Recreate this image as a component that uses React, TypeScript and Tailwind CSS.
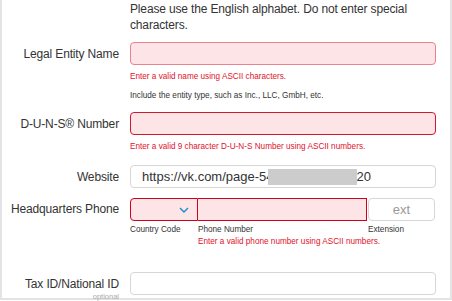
import React from 'react';

const font = { fontFamily: '"Liberation Sans", Arial, sans-serif' };

function Label({ children, sub }: { children: React.ReactNode; sub?: string }) {
  return (
    <div className="w-[128px] shrink-0 pr-[11px] text-right text-[12px] tracking-[-0.15px] text-[#333] leading-[16px] whitespace-nowrap relative">
      {children}
      {sub && <div className="absolute right-[11px] top-[16px] text-[7.5px] tracking-normal leading-[10px] text-[#aaa]">{sub}</div>}
    </div>
  );
}

export default function App() {
  return (
    <div className="w-[452px] h-[301px] overflow-hidden bg-white" style={font}>
      <div className="h-[300px] w-[452px] border-l-2 border-r-2 border-b-2 border-[#e3e3e3] box-border">
        <div className="pl-[128px] pt-[1px] pr-[14px] text-[12px] tracking-[-0.15px] leading-[16px] text-[#333]">
          Please use the English alphabet. Do not enter special characters.
        </div>

        <div className="flex items-center mt-[9px]">
          <Label>Legal Entity Name</Label>
          <div className="w-[306px] h-[23px] rounded-[4px] border border-[#e8838d] bg-[#fde4e6]" />
        </div>
        <div className="pl-[128px] mt-[7px] text-[8.2px] leading-[10px] text-[#e0122b]">
          Enter a valid name using ASCII characters.
        </div>
        <div className="pl-[128px] mt-[9px] text-[8.2px] leading-[10px] text-[#333]">
          Include the entity type, such as Inc., LLC, GmbH, etc.
        </div>

        <div className="flex items-center mt-[11px]">
          <Label>D-U-N-S® Number</Label>
          <div className="w-[306px] h-[23px] rounded-[4px] border border-[#d0192b] bg-[#fde4e6]" />
        </div>
        <div className="pl-[128px] mt-[7px] text-[8.2px] leading-[10px] text-[#e0122b]">
          Enter a valid 9 character D-U-N-S Number using ASCII numbers.
        </div>

        <div className="flex items-center mt-[13px]">
          <Label>Website</Label>
          <div className="w-[306px] h-[23px] rounded-[4px] border border-[#d6d6d6] flex items-center pl-[11px] text-[13px] text-[#333] whitespace-nowrap overflow-hidden">
            <span>https://vk.com/page-54</span>
            <span className="relative -ml-[6px] w-[89px] h-[16px] bg-[#cccccc] shrink-0" />
            <span>20</span>
          </div>
        </div>

        <div className="flex items-start mt-[10px]">
          <div className="pt-[3px]">
            <Label>Headquarters Phone</Label>
          </div>
          <div className="flex flex-col">
            <div className="flex">
              <div className="w-[68px] h-[23px] rounded-l-[4px] border border-[#d0021b] bg-[#fde4e6] flex items-center justify-end pr-[8px]">
                <svg width="10" height="6" viewBox="0 0 10 6" fill="none">
                  <path d="M1 1l4 4 4-4" stroke="#1a8ccf" strokeWidth="1.4" />
                </svg>
              </div>
              <div className="w-[169px] h-[23px] border border-l-0 border-[#d0021b] bg-[#fde4e6]" />
              <div className="ml-[1px] w-[67px] h-[23px] rounded-[4px] border border-[#d6d6d6] flex items-center justify-center text-[13px] text-[#999]">
                ext
              </div>
            </div>
            <div className="flex mt-[4px] text-[8.2px] leading-[10px] text-[#333] whitespace-nowrap">
              <div className="w-[68px]">Country Code</div>
              <div className="w-[170px]">
                Phone Number
                <div className="mt-[2px] text-[#e0122b]">Enter a valid phone number using ASCII numbers.</div>
              </div>
              <div>Extension</div>
            </div>
          </div>
        </div>

        <div className="flex items-center mt-[25px]">
          <Label sub="optional">Tax ID/National ID</Label>
          <div className="w-[306px] h-[23px] rounded-[4px] border border-[#d6d6d6]" />
        </div>
      </div>
    </div>
  );
}
